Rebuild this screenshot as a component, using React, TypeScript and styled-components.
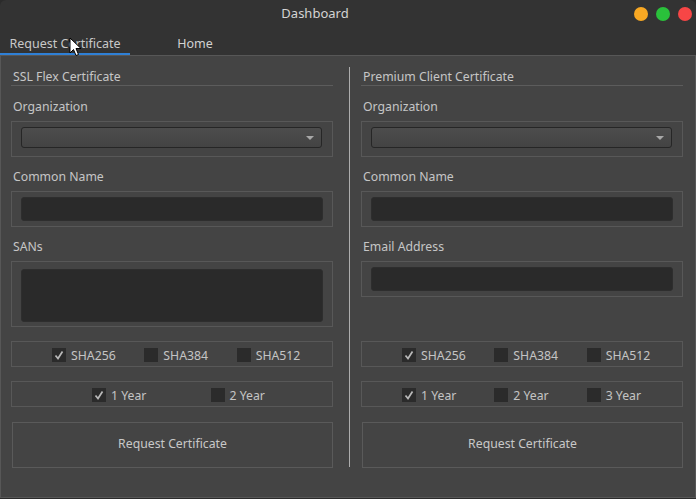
import { FC } from 'react';
import styled, { createGlobalStyle } from 'styled-components';

const GlobalStyle = createGlobalStyle`
  html, body {
    margin: 0;
    padding: 0;
    background: #2b2b2b;
  }
  body {
    font-family: "Noto Sans", "Open Sans", Arial, sans-serif;
    font-size: 12px;
    color: #c6c6c6;
  }
`;

const Window = styled.div`
  position: relative;
  width: 696px;
  height: 498px;
  display: flex;
  flex-direction: column;
  background: #333333;
  border-radius: 6px 6px 0 0;
  overflow: hidden;
`;

const TitleBar = styled.div`
  display: flex;
  align-items: center;
  height: 28px;
  flex-shrink: 0;
`;

const Title = styled.div`
  flex: 1;
  text-align: center;
  font-size: 13px;
  color: #d4d4d4;
  padding-bottom: 2px;
`;

const Lights = styled.div`
  display: flex;
  gap: 8px;
  margin-left: 4px;
  padding-right: 4px;
`;

const Light = styled.span<{ color: string }>`
  width: 14px;
  height: 14px;
  border-radius: 50%;
  background: ${({ color }) => color};
`;

const TabBar = styled.div`
  display: flex;
  height: 27px;
  flex-shrink: 0;
`;

const Tab = styled.div<{ active?: boolean }>`
  width: 130px;
  display: flex;
  align-items: center;
  justify-content: center;
  padding-top: 6px;
  box-sizing: border-box;
  color: ${({ active }) => (active ? '#c8c8c8' : '#d2d2d2')};
  border-bottom: 2px solid ${({ active }) => (active ? '#2f80d6' : 'transparent')};
  font-size: 12.5px;
`;

const Panel = styled.div`
  flex: 1;
  display: flex;
  flex-direction: column;
  background: #444444;
  border: 1px solid #575757;
  padding: 12px 11px 0 10px;
`;

const Body = styled.div`
  display: flex;
`;

const Column = styled.div`
  width: 322px;
  display: flex;
  flex-direction: column;
`;

const Divider = styled.div`
  width: 1px;
  background: #adadad;
  margin: -1px 11px 1px 16px;
`;

const SectionHeader = styled.div`
  line-height: 16px;
  padding: 1px 0 0 2px;
  border-bottom: 1px solid #5c5c5c;
  font-size: 12.25px;
`;

const Label = styled.div<{ mt: number }>`
  line-height: 16px;
  padding-left: 2px;
  margin-top: ${({ mt }) => mt + 1}px;
  margin-bottom: 6px;
  font-size: 12.25px;
`;

const Frame = styled.div<{ pad: string }>`
  border: 1px solid #585858;
  padding: ${({ pad }) => pad};
`;

const Combo = styled.div`
  height: 21px;
  box-sizing: border-box;
  border: 1px solid #262626;
  border-radius: 3px;
  background: linear-gradient(#4d4d4d, #434343);
  display: flex;
  align-items: center;
  justify-content: flex-end;
  padding-right: 7px;
`;

const Arrow = styled.span`
  width: 0;
  height: 0;
  border-left: 4px solid transparent;
  border-right: 4px solid transparent;
  border-top: 4px solid #a8a8a8;
`;

const Input = styled.div<{ h: number }>`
  height: ${({ h }) => h}px;
  box-sizing: border-box;
  background: #2a2a2a;
  border: 1px solid #2e2e2e;
  border-radius: 3px;
`;

const Bottom = styled.div`
  margin-top: auto;
  padding-top: 14px;
  display: flex;
  flex-direction: column;
`;

const CheckRow = styled.div<{ cols: number; lead: number; mb: number }>`
  height: 26px;
  box-sizing: border-box;
  border: 1px solid #585858;
  display: grid;
  grid-template-columns: repeat(${({ cols }) => cols}, 1fr);
  align-items: center;
  padding: 2px 3px 0 ${({ lead }) => lead}px;
  margin-bottom: ${({ mb }) => mb}px;
`;

const CheckItem = styled.label`
  display: flex;
  align-items: center;
  gap: 5px;
  font-size: 12.25px;
  color: #c4c4c4;
`;

const Box = styled.span`
  width: 14px;
  height: 14px;
  background: #2b2b2b;
  display: flex;
  align-items: center;
  justify-content: center;
`;

const Button = styled.button`
  height: 46px;
  width: 321px;
  margin-left: 1px;
  background: #444444;
  border: 1px solid #5a5a5a;
  color: #c8c8c8;
  font-family: inherit;
  font-size: 12.25px;
  padding: 0 0 3px;
`;

const Cursor = styled.svg`
  position: absolute;
  left: 69px;
  top: 37px;
`;

type CheckProps = { label: string; checked?: boolean };

const Check: FC<CheckProps> = ({ label, checked }) => (
  <CheckItem>
    <Box>
      {checked && (
        <svg width="12" height="12" viewBox="0 0 12 12">
          <path d="M2.5 6.5 L5 9.5 L9.5 2.5" fill="none" stroke="#b9b9b9" strokeWidth="1.7" />
        </svg>
      )}
    </Box>
    {label}
  </CheckItem>
);

const App = () => (
  <>
    <GlobalStyle />
    <Window>
      <TitleBar>
        <Title>Dashboard</Title>
        <Lights>
          <Light color="#f8a823" />
          <Light color="#2ac13b" />
          <Light color="#f74646" />
        </Lights>
      </TitleBar>
      <TabBar>
        <Tab active>Request Certificate</Tab>
        <Tab>Home</Tab>
      </TabBar>
      <Panel>
        <Body>
          <Column>
            <SectionHeader>SSL Flex Certificate</SectionHeader>
            <Label mt={12}>Organization</Label>
            <Frame pad="5px 10px 8px 9px">
              <Combo>
                <Arrow />
              </Combo>
            </Frame>
            <Label mt={11}>Common Name</Label>
            <Frame pad="5px 9px">
              <Input h={24} />
            </Frame>
            <Label mt={11}>SANs</Label>
            <Frame pad="7px 9px 4px">
              <Input h={53} />
            </Frame>
            <Bottom>
              <CheckRow cols={3} lead={40} mb={14}>
                <Check label="SHA256" checked />
                <Check label="SHA384" />
                <Check label="SHA512" />
              </CheckRow>
              <CheckRow cols={2} lead={80} mb={15}>
                <Check label="1 Year" checked />
                <Check label="2 Year" />
              </CheckRow>
              <Button>Request Certificate</Button>
            </Bottom>
          </Column>
          <Divider />
          <Column>
            <SectionHeader>Premium Client Certificate</SectionHeader>
            <Label mt={12}>Organization</Label>
            <Frame pad="5px 10px 8px 9px">
              <Combo>
                <Arrow />
              </Combo>
            </Frame>
            <Label mt={11}>Common Name</Label>
            <Frame pad="5px 9px">
              <Input h={24} />
            </Frame>
            <Label mt={11}>Email Address</Label>
            <Frame pad="5px 9px">
              <Input h={24} />
            </Frame>
            <Bottom>
              <CheckRow cols={3} lead={40} mb={14}>
                <Check label="SHA256" checked />
                <Check label="SHA384" />
                <Check label="SHA512" />
              </CheckRow>
              <CheckRow cols={3} lead={40} mb={15}>
                <Check label="1 Year" checked />
                <Check label="2 Year" />
                <Check label="3 Year" />
              </CheckRow>
              <Button>Request Certificate</Button>
            </Bottom>
          </Column>
        </Body>
      </Panel>
      <Cursor width="13" height="20" viewBox="0 0 13 20">
        <path d="M1 1 L1 16 L4.5 12.5 L7 18.5 L9.5 17.5 L7 11.5 L12 11.5 Z" fill="#ffffff" stroke="#000000" strokeWidth="1" strokeLinejoin="round" />
      </Cursor>
    </Window>
  </>
);

export default App;
